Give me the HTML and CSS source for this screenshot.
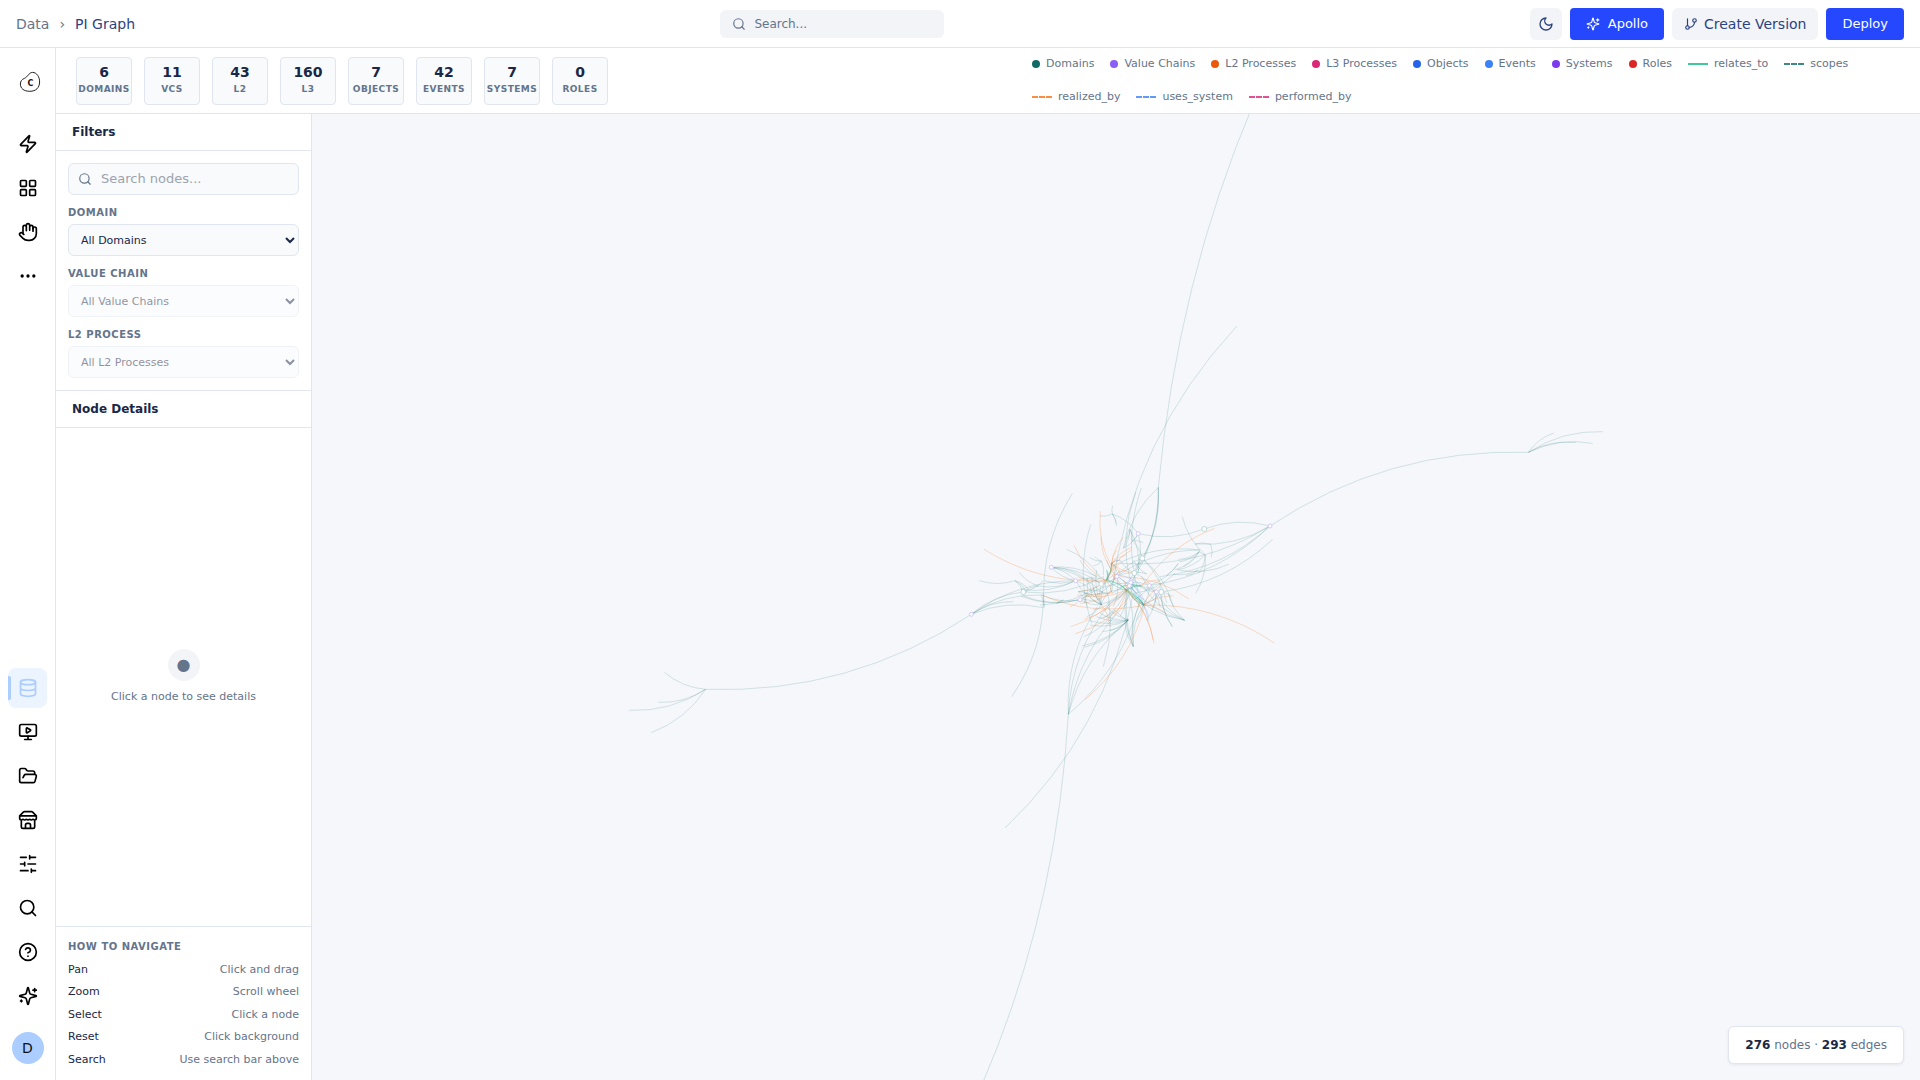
FILE: index.html
```html
<!DOCTYPE html>
<html lang="en">
<head>
<meta charset="utf-8">
<meta name="viewport" content="width=device-width, initial-scale=1">
<title>PI Graph</title>
<link rel="stylesheet" href="styles.css">
</head>
<body>
<div class="app">
  <header class="topbar">
    <nav class="crumbs" aria-label="Breadcrumb">
      <a href="#" class="crumb">Data</a><span class="crumb-sep">›</span><a href="#" class="crumb crumb-current">PI Graph</a>
    </nav>
    <button class="global-search" type="button">
      <svg class="icon icon-sm" viewBox="0 0 24 24"><circle cx="11" cy="11" r="8"/><path d="m21 21-4.3-4.3"/></svg>
      <span>Search...</span>
    </button>
    <div class="actions">
      <button class="btn btn-icon" type="button" aria-label="Toggle theme"><svg class="icon icon-md" viewBox="0 0 24 24"><path d="M12 3a6 6 0 0 0 9 9 9 9 0 1 1-9-9Z"/></svg></button>
      <button class="btn btn-primary" type="button"><svg class="icon icon-sm" viewBox="0 0 24 24"><path d="M9.937 15.5A2 2 0 0 0 8.5 14.063l-6.135-1.582a.5.5 0 0 1 0-.962L8.5 9.936A2 2 0 0 0 9.937 8.5l1.582-6.135a.5.5 0 0 1 .963 0L14.063 8.5A2 2 0 0 0 15.5 9.937l6.135 1.581a.5.5 0 0 1 0 .964L15.5 14.063a2 2 0 0 0-1.437 1.437l-1.582 6.135a.5.5 0 0 1-.963 0zM20 3v4M22 5h-4M4 17v2M5 18H3"/></svg>Apollo</button>
      <button class="btn btn-soft" type="button"><svg class="icon icon-sm" viewBox="0 0 24 24"><path d="M6 3v12"/><circle cx="18" cy="6" r="3"/><circle cx="6" cy="18" r="3"/><path d="M18 9a9 9 0 0 1-9 9"/></svg>Create Version</button>
      <button class="btn btn-primary" type="button">Deploy</button>
    </div>
  </header>

  <div class="shell">
    <nav class="rail" aria-label="Main">
      <a class="logo" href="#" aria-label="Home">
        <svg viewBox="0 0 24 24" width="24" height="24"><path d="M14.5 2.4c4.300 0 7.200 4.600 7.100 9.600-.1 5.700-3.600 9.300-9.800 9.300-6 0-9.400-2.800-9.400-7.300 0-2.900 1.400-4.500 3.900-5.600 3.800-1.500 4.400-6 8.200-6z" fill="none" stroke="#222" stroke-width="1"/><text x="12.500" y="16" text-anchor="middle" class="logo-letter">C</text></svg>
      </a>
      <div class="rail-group">
        <a class="rail-item" href="#" aria-label="Actions"><svg class="icon icon-lg" viewBox="0 0 24 24"><path d="M4 14a1 1 0 0 1-.78-1.630l9.900-10.200a.5.5 0 0 1 .86.46l-1.920 6.020A1 1 0 0 0 13 10h7a1 1 0 0 1 .78 1.630l-9.900 10.200a.5.5 0 0 1-.86-.46l1.920-6.020A1 1 0 0 0 11 14z"/></svg></a>
        <a class="rail-item" href="#" aria-label="Apps"><svg class="icon icon-lg" viewBox="0 0 24 24"><rect x="3" y="3" width="7" height="7" rx="1"/><rect x="14" y="3" width="7" height="7" rx="1"/><rect x="14" y="14" width="7" height="7" rx="1"/><rect x="3" y="14" width="7" height="7" rx="1"/></svg></a>
        <a class="rail-item" href="#" aria-label="Pan"><svg class="icon icon-lg" viewBox="0 0 24 24"><path d="M18 11V6a2 2 0 0 0-2-2a2 2 0 0 0-2 2M14 10V4a2 2 0 0 0-2-2a2 2 0 0 0-2 2v2M10 10.500V6a2 2 0 0 0-2-2a2 2 0 0 0-2 2v8"/><path d="M18 8a2 2 0 1 1 4 0v6a8 8 0 0 1-8 8h-2c-2.800 0-4.500-.86-5.990-2.340l-3.600-3.600a2 2 0 0 1 2.830-2.820L7 15"/></svg></a>
        <a class="rail-item" href="#" aria-label="More"><svg class="icon icon-lg" viewBox="0 0 24 24"><circle cx="12" cy="12" r="1"/><circle cx="19" cy="12" r="1"/><circle cx="5" cy="12" r="1"/></svg></a>
      </div>
      <div class="rail-group rail-bottom">
        <a class="rail-item rail-active" href="#" aria-label="Data" aria-current="page"><svg class="icon icon-lg" viewBox="0 0 24 24"><ellipse cx="12" cy="5" rx="9" ry="3"/><path d="M3 5v14a9 3 0 0 0 18 0V5M3 12a9 3 0 0 0 18 0"/></svg></a>
        <a class="rail-item" href="#" aria-label="Simulate"><svg class="icon icon-lg" viewBox="0 0 24 24"><path d="M10 7.750a.75.75 0 0 1 1.142-.638l3.664 2.249a.75.75 0 0 1 0 1.278l-3.664 2.250a.75.75 0 0 1-1.142-.64zM12 17v4M8 21h8"/><rect x="2" y="3" width="20" height="14" rx="2"/></svg></a>
        <a class="rail-item" href="#" aria-label="Files"><svg class="icon icon-lg" viewBox="0 0 24 24"><path d="m6 14 1.500-2.900A2 2 0 0 1 9.240 10H20a2 2 0 0 1 1.940 2.500l-1.540 6a2 2 0 0 1-1.950 1.500H4a2 2 0 0 1-2-2V5a2 2 0 0 1 2-2h3.900a2 2 0 0 1 1.690.9l.81 1.200a2 2 0 0 0 1.670.9H18a2 2 0 0 1 2 2v2"/></svg></a>
        <a class="rail-item" href="#" aria-label="Marketplace"><svg class="icon icon-lg" viewBox="0 0 24 24"><path d="m2 7 4.410-4.410A2 2 0 0 1 7.830 2h8.340a2 2 0 0 1 1.420.59L22 7M4 12v8a2 2 0 0 0 2 2h12a2 2 0 0 0 2-2v-8M15 22v-4a2 2 0 0 0-2-2h-2a2 2 0 0 0-2 2v4M2 7h20M22 7v3a2 2 0 0 1-2 2a2.700 2.700 0 0 1-1.590-.63.7.7 0 0 0-.82 0A2.700 2.700 0 0 1 16 12a2.700 2.700 0 0 1-1.590-.63.7.7 0 0 0-.82 0A2.700 2.700 0 0 1 12 12a2.700 2.700 0 0 1-1.590-.63.7.7 0 0 0-.82 0A2.700 2.700 0 0 1 8 12a2.700 2.700 0 0 1-1.590-.63.7.7 0 0 0-.82 0A2.700 2.700 0 0 1 4 12a2 2 0 0 1-2-2V7"/></svg></a>
        <a class="rail-item" href="#" aria-label="Settings"><svg class="icon icon-lg" viewBox="0 0 24 24"><path d="M21 4h-7M10 4H3M21 12h-9M8 12H3M21 20h-5M12 20H3M14 2v4M8 10v4M16 18v4"/></svg></a>
        <a class="rail-item" href="#" aria-label="Search"><svg class="icon icon-lg" viewBox="0 0 24 24"><circle cx="11" cy="11" r="8"/><path d="m21 21-4.300-4.300"/></svg></a>
        <a class="rail-item" href="#" aria-label="Help"><svg class="icon icon-lg" viewBox="0 0 24 24"><circle cx="12" cy="12" r="10"/><path d="M9.090 9a3 3 0 0 1 5.830 1c0 2-3 3-3 3M12 17h.01"/></svg></a>
        <a class="rail-item" href="#" aria-label="Assistant"><svg class="icon icon-lg" viewBox="0 0 24 24"><path d="M9.937 15.5A2 2 0 0 0 8.5 14.063l-6.135-1.582a.5.5 0 0 1 0-.962L8.5 9.936A2 2 0 0 0 9.937 8.5l1.582-6.135a.5.5 0 0 1 .963 0L14.063 8.5A2 2 0 0 0 15.5 9.937l6.135 1.581a.5.5 0 0 1 0 .964L15.5 14.063a2 2 0 0 0-1.437 1.437l-1.582 6.135a.5.5 0 0 1-.963 0zM20 3v4M22 5h-4M4 17v2M5 18H3"/></svg></a>
      </div>
      <button class="avatar" type="button">D</button>
    </nav>

    <main class="main">
      <section class="summary">
        <div class="stats">
          <div class="stat"><strong>6</strong><span>DOMAINS</span></div>
          <div class="stat"><strong>11</strong><span>VCS</span></div>
          <div class="stat"><strong>43</strong><span>L2</span></div>
          <div class="stat"><strong>160</strong><span>L3</span></div>
          <div class="stat"><strong>7</strong><span>OBJECTS</span></div>
          <div class="stat"><strong>42</strong><span>EVENTS</span></div>
          <div class="stat"><strong>7</strong><span>SYSTEMS</span></div>
          <div class="stat"><strong>0</strong><span>ROLES</span></div>
        </div>
        <ul class="legend">
          <li><i class="dot c-domain"></i>Domains</li>
          <li><i class="dot c-chain"></i>Value Chains</li>
          <li><i class="dot c-l2"></i>L2 Processes</li>
          <li><i class="dot c-l3"></i>L3 Processes</li>
          <li><i class="dot c-object"></i>Objects</li>
          <li><i class="dot c-event"></i>Events</li>
          <li><i class="dot c-system"></i>Systems</li>
          <li><i class="dot c-role"></i>Roles</li>
          <li><i class="line solid l-relates"></i>relates_to</li>
          <li><i class="line l-scopes"></i>scopes</li>
          <li><i class="line l-realized"></i>realized_by</li>
          <li><i class="line l-uses"></i>uses_system</li>
          <li><i class="line l-performed"></i>performed_by</li>
        </ul>
      </section>

      <div class="workspace">
        <aside class="panel">
          <h2 class="panel-title">Filters</h2>
          <form class="filters">
            <div class="search-field">
              <svg class="icon icon-sm" viewBox="0 0 24 24"><circle cx="11" cy="11" r="8"/><path d="m21 21-4.300-4.300"/></svg>
              <input type="text" placeholder="Search nodes..." aria-label="Search nodes">
            </div>
            <div class="field"><label for="domain">DOMAIN</label><select id="domain"><option>All Domains</option></select></div>
            <div class="field"><label for="chain">VALUE CHAIN</label><select id="chain" disabled><option>All Value Chains</option></select></div>
            <div class="field"><label for="process">L2 PROCESS</label><select id="process" disabled><option>All L2 Processes</option></select></div>
          </form>
          <h2 class="panel-title panel-title-next">Node Details</h2>
          <div class="empty"><span class="empty-icon">●</span><p>Click a node to see details</p></div>
          <section class="help">
            <h3>HOW TO NAVIGATE</h3>
            <dl>
              <div><dt>Pan</dt><dd>Click and drag</dd></div>
              <div><dt>Zoom</dt><dd>Scroll wheel</dd></div>
              <div><dt>Select</dt><dd>Click a node</dd></div>
              <div><dt>Reset</dt><dd>Click background</dd></div>
              <div><dt>Search</dt><dd>Use search bar above</dd></div>
            </dl>
          </section>
        </aside>
        <section class="stage" aria-label="Graph">
          <svg id="graph" viewBox="0 0 1608 966" preserveAspectRatio="xMidYMid slice"></svg>
          <p class="counter"><strong>276</strong> nodes · <strong>293</strong> edges</p>
        </section>
      </div>
    </main>
  </div>
</div>
<script src="graph.js"></script>
</body>
</html>
```
FILE: graph.js
```js
// Each edge: x1, y1, x2, y2 in layout units (three per pixel). Edges bow to the left of their direction.
const SCALE = 1 / 3;
const ORIGIN = [648, 346];
const BOW = 0.16;

const edges = {
  scopes: [
    // long branches
    [930,198,1705,-23],[1705,-23,1928,-85],[1705,-23,1898,-50],[1705,-23,1781,-81],[1705,-23,1848,-53],
    [34,463,-763,688],[-763,688,-887,637],[-763,688,-905,727],[-763,688,-992,751],[-763,688,-926,818],
    [595,82,1515,-2080],[325,763,-400,2640],[455,395,830,-401],[520,400,135,1104],
    [250,400,155,710],[252,440,337,100],[395,490,392,193],
    // upper cluster
    [595,82,508,375],[595,82,520,345],[595,82,545,300],[490,265,595,82],[535,395,544,84],[512,370,527,98],
    [457,162,458,137],[457,162,420,168],[457,162,470,198],[457,162,535,221],[457,162,468,190],
    [732,207,535,221],[732,207,930,198],[510,208,490,265],[510,208,516,240],[510,208,500,238],[535,221,516,242],
    [516,242,550,248],[535,221,490,265],[535,221,530,330],[510,208,535,340],[516,242,547,295],
    // right cluster
    [930,198,705,252],[930,198,600,350],[930,198,568,377],[938,238,604,396],[455,320,720,270],[930,198,480,310],[471,349,720,270],
    [736,285,707,400],[736,285,667,170],[736,285,718,275],[705,252,752,253],[752,253,754,292],[806,313,655,330],
    [718,275,645,330],[718,275,655,298],[718,275,658,306],[718,275,670,320],[736,285,650,330],[715,330,678,347],
    [736,285,715,340],[655,310,620,345],[715,330,640,343],[655,310,568,377],[645,340,523,400],
    [674,481,550,380],[674,481,508,377],[674,481,500,390],[674,481,589,396],[674,481,625,400],[637,500,604,396],
    [637,500,600,370],[604,396,632,408],[589,396,575,450],[547,295,640,440],[547,295,620,430],
    // left cluster
    [34,463,190,396],[34,463,250,443],[34,463,245,405],[34,463,347,362],[34,463,160,425],
    [165,362,58,362],[165,362,190,396],[165,362,205,388],[165,362,200,395],[190,396,235,378],[235,378,178,337],
    [250,362,190,396],[347,362,235,378],[347,362,183,388],[347,362,254,362],[430,350,190,396],
    [360,419,245,405],[360,419,190,408],[360,419,183,409],[243,405,253,443],[310,420,290,430],[424,372,240,435],
    [274,322,347,362],[274,322,424,372],[274,322,410,350],[274,322,375,355],[347,362,274,322],[274,322,430,400],
    [320,268,420,350],[424,434,347,362],[424,434,360,419],[290,430,310,420],
    // lower cluster
    [325,763,505,480],[325,763,450,430],[325,763,412,440],[540,420,325,763],[325,763,500,430],[430,350,430,620],
    [520,560,500,390],[520,560,508,377],[520,560,540,430],[520,560,550,435],[520,560,495,480],
    [505,480,420,460],[505,480,388,482],[505,480,390,495],[505,480,428,515],[505,480,374,562],[505,480,466,450],
    [505,480,450,512],[505,480,366,558],[505,480,440,440],[505,480,410,470],[466,450,420,475],[466,450,372,530],
    // core
    [424,434,424,372],[424,434,400,380],[424,434,395,350],[424,434,440,360],[424,434,450,395],[424,434,382,400],
    [424,434,410,330],[424,434,380,470],[425,304,388,292],[425,304,400,318],[425,304,404,290],[425,304,430,345],
    [380,355,372,430],[380,355,395,410],[380,355,424,372],[355,395,420,420],[355,395,382,440],[355,395,440,400],
    [471,349,424,372],[471,349,400,410],[471,349,523,339],[471,349,460,440],[471,349,440,300],[471,349,547,295],
    [523,339,560,342],[523,339,480,300],[523,339,589,396],[523,339,547,295],[523,339,500,420],[523,339,455,400],
    [512,368,568,377],[512,368,424,434],[512,368,550,435],[512,368,470,420],[508,377,589,396],[508,377,440,430],
    [568,377,600,440],[568,377,550,435],[568,377,520,420],[568,377,545,350],[589,396,550,435],[589,396,560,480],
    [604,396,550,435],[604,396,540,380],[450,395,480,330],[450,395,500,390],[455,310,440,360],[455,310,480,300],
    [500,390,480,470],[500,390,430,475],[500,390,545,375],[500,390,470,350],[500,390,400,450],[500,390,512,540],
    [550,435,500,390],[550,435,530,480],[550,435,508,377],[440,360,500,390],[440,360,455,330],[360,419,424,434],
    [360,419,450,400],[360,419,512,368],[347,362,440,360],[347,362,400,400],[410,350,360,300],[560,342,520,300]
  ],
  realized: [
    [440,362,72,268],[550,435,943,549],[555,435,375,719],[500,390,582,550],[505,395,580,540],[455,320,421,153],
    [455,330,423,230],[480,350,687,417],[545,380,764,205],[440,365,342,256],[480,400,332,500],[500,420,346,521],
    [555,435,245,405],[455,310,515,262],[455,310,490,233],[455,310,500,285],[455,310,440,362],
    [455,310,470,270],[455,330,515,270],[440,362,480,310],[440,362,500,330],[440,362,355,395],[500,390,352,405],
    [500,390,372,478],[440,362,352,350],[455,395,360,430],[550,435,615,458],[550,435,600,380],[500,390,440,490],
    [455,310,462,360],[455,310,447,345],[455,310,480,340],[550,435,490,360],[500,390,455,340],[424,434,450,500],
    [455,395,370,400],[540,378,600,360],[360,419,330,440],[440,362,456,400],[550,435,640,408],[523,339,455,310]
  ],
  uses: [[471,349,530,410],[471,349,550,435],[508,377,566,484],[475,345,545,378],[455,310,480,300],[512,368,555,430],[530,410,566,470],[440,330,445,360]],
  relates: [
    [440,330,440,362],[444,335,438,360],[440,362,500,390],[500,390,442,360],[500,390,550,435],[552,436,505,395],
    [512,400,550,432],[500,390,545,378],[480,382,540,378],[490,378,542,377],[520,408,553,436],[455,310,440,360],[455,308,470,335]
  ]
};

const nodes = {
  chain: [[34,463],[274,322],[347,362],[360,419],[535,221],[930,198],[471,349],[512,368],[508,377],[568,377],[589,396]],
  domain: [[190,396],[424,372],[547,295],[523,339],[604,396],[733,207]]
};

const svg = document.getElementById("graph");
const NS = "http://www.w3.org/2000/svg";
const px = (x, i) => ORIGIN[i] + x * SCALE;

function add(name, attrs) {
  const el = document.createElementNS(NS, name);
  for (const key in attrs) el.setAttribute(key, attrs[key]);
  svg.appendChild(el);
}

for (const kind in edges) {
  for (const [a, b, c, d] of edges[kind]) {
    const x1 = px(a, 0), y1 = px(b, 1), x2 = px(c, 0), y2 = px(d, 1);
    const cx = (x1 + x2) / 2 + (y2 - y1) * BOW;
    const cy = (y1 + y2) / 2 - (x2 - x1) * BOW;
    add("path", { class: "edge edge-" + kind, d: `M${x1} ${y1}Q${cx} ${cy} ${x2} ${y2}` });
  }
}
for (const kind in nodes) {
  for (const [x, y] of nodes[kind]) {
    add("circle", { class: "node node-" + kind, cx: px(x, 0), cy: px(y, 1), r: kind === "domain" ? 2.5 : 2 });
  }
}
```
FILE: styles.css
```css
:root {
  --ink: #1a2747;
  --muted: #64748b;
  --navy: #2b4282;
  --line: #e0e6ef;
  --soft: #f2f4f8;
  --field: #f8fafc;
  --blue: #2548ff;
  --sky: #abcdff;
}

* { box-sizing: border-box; }

body {
  margin: 0;
  font-family: "DejaVu Sans", sans-serif;
  font-size: 11px;
  line-height: 1.5;
  color: var(--ink);
  background: #fff;
}

button, input, select { font: inherit; color: inherit; }
button { border: 0; cursor: pointer; }
a { color: inherit; text-decoration: none; }
h2, h3, p, ul, dl, dd { margin: 0; padding: 0; }

.app { display: flex; flex-direction: column; height: 100vh; }

.icon {
  flex: none;
  fill: none;
  stroke: currentColor;
  stroke-width: 2;
  stroke-linecap: round;
  stroke-linejoin: round;
}
.icon-sm { width: 14px; height: 14px; }
.icon-md { width: 16px; height: 16px; }
.icon-lg { width: 20px; height: 20px; }

/* Top bar */
.topbar {
  display: flex;
  flex: none;
  align-items: center;
  justify-content: space-between;
  height: 48px;
  padding: 1px 16px 0;
  border-bottom: 1px solid var(--line);
}
.crumbs { display: flex; gap: 10px; font-size: 14px; color: var(--muted); }
.crumb-current { color: var(--navy); }
.global-search {
  display: flex;
  align-items: center;
  gap: 8px;
  width: 224px;
  height: 28px;
  padding: 0 12px;
  border-radius: 6px;
  background: var(--soft);
  color: var(--muted);
  font-size: 12px;
}
.actions { display: flex; gap: 8px; }
.btn {
  display: flex;
  align-items: center;
  justify-content: center;
  height: 32px;
  border-radius: 6px;
}
.btn-icon { width: 32px; padding: 0; background: var(--soft); color: var(--navy); }
.btn-primary { gap: 8px; padding: 0 16px; border-radius: 4px; background: var(--blue); color: #fff; font-size: 13px; }
.btn-soft { gap: 6px; padding: 0 12px; background: var(--soft); color: var(--navy); font-size: 14px; }

.shell { display: flex; flex: 1; min-height: 0; }

/* Icon rail */
.rail {
  display: flex;
  flex: none;
  flex-direction: column;
  width: 56px;
  padding: 0 8px 16px;
  border-right: 1px solid var(--line);
  color: #000;
}
.logo { display: flex; align-items: center; justify-content: center; height: 68px; padding-left: 4px; }
.logo-letter { font-size: 8px; font-weight: 700; fill: #111; }
.rail-group { display: flex; flex-direction: column; gap: 4px; padding-top: 8px; }
.rail-bottom { margin-top: auto; }
.rail-item {
  display: flex;
  position: relative;
  align-items: center;
  justify-content: center;
  height: 40px;
  border-radius: 8px;
}
.rail-active { background: #ecf4ff; color: var(--sky); }
.rail-active::before {
  content: "";
  position: absolute;
  left: 0;
  top: 8px;
  width: 3px;
  height: 24px;
  border-radius: 0 2px 2px 0;
  background: var(--sky);
}
.avatar {
  align-self: center;
  width: 32px;
  height: 32px;
  margin-top: 16px;
  padding: 0;
  border-radius: 50%;
  background: var(--sky);
  color: #111;
  font-size: 14px;
}

/* Summary strip */
.main { display: flex; flex: 1; flex-direction: column; min-width: 0; }
.summary {
  display: flex;
  flex: none;
  align-items: center;
  justify-content: space-between;
  gap: 24px;
  padding: 8px 20px;
  border-bottom: 1px solid var(--line);
}
.stats { display: flex; gap: 12px; }
.stat {
  display: flex;
  flex-direction: column;
  align-items: center;
  justify-content: center;
  width: 56px;
  height: 48px;
  padding-bottom: 2px;
  border: 1px solid var(--line);
  border-radius: 4px;
  background: var(--field);
}
.stat strong { font-size: 14px; line-height: 18px; }
.stat span { color: var(--muted); font-size: 9px; font-weight: 700; line-height: 16px; letter-spacing: .05em; }
.legend {
  display: flex;
  flex-wrap: wrap;
  gap: 16px;
  max-width: 868px;
  color: var(--muted);
  list-style: none;
}
.legend li { display: flex; align-items: center; gap: 6px; }
.dot { width: 8px; height: 8px; border-radius: 50%; }
.line { width: 20px; border-top: 2px dashed; opacity: .8; }
.solid { border-top-style: solid; }
.c-domain { background: #0f6b68; }
.c-chain { background: #8b5cf6; }
.c-l2 { background: #ea580c; }
.c-l3 { background: #db2777; }
.c-object { background: #2563eb; }
.c-event { background: #3b82f6; }
.c-system { background: #7c3aed; }
.c-role { background: #dc2626; }
.l-relates { border-color: #10b981; }
.l-scopes { border-color: #0f6b68; }
.l-realized { border-color: #f97316; }
.l-uses { border-color: #3b82f6; }
.l-performed { border-color: #db2777; }

/* Left panel */
.workspace { display: flex; flex: 1; min-height: 0; }
.panel {
  display: flex;
  flex: none;
  flex-direction: column;
  width: 256px;
  border-right: 1px solid var(--line);
}
.panel-title {
  padding: 9px 16px;
  border-bottom: 1px solid var(--line);
  font-size: 12px;
  line-height: 18px;
}
.panel-title-next { border-top: 1px solid var(--line); }
.filters { display: flex; flex-direction: column; gap: 10px; padding: 12px; }
.search-field {
  display: flex;
  align-items: center;
  gap: 9px;
  height: 32px;
  padding: 0 9px;
  border: 1px solid var(--line);
  border-radius: 6px;
  background: var(--field);
  color: var(--muted);
}
.search-field input {
  flex: 1;
  min-width: 0;
  padding: 0;
  border: 0;
  outline: 0;
  background: none;
  font-size: 13px;
}
.search-field input::placeholder { color: #9ca3af; }
.field { display: flex; flex-direction: column; gap: 4px; }
.field label, .help h3 {
  color: var(--muted);
  font-size: 10px;
  font-weight: 700;
  line-height: 15px;
  letter-spacing: .05em;
}
.field select {
  height: 32px;
  padding: 0 8px;
  border: 1px solid var(--line);
  border-radius: 6px;
  background: var(--field);
}
.field select:disabled { opacity: .5; }
.empty {
  display: flex;
  flex: 1;
  flex-direction: column;
  align-items: center;
  justify-content: center;
  gap: 8px;
  color: var(--muted);
}
.empty-icon {
  display: flex;
  align-items: center;
  justify-content: center;
  width: 32px;
  height: 32px;
  border-radius: 50%;
  background: var(--soft);
  font-size: 16px;
}
.help { padding: 12px; border-top: 1px solid var(--line); }
.help dl { display: flex; flex-direction: column; gap: 6px; margin-top: 8px; }
.help dl div { display: flex; justify-content: space-between; }
.help dd { color: var(--muted); }

/* Graph */
.stage { position: relative; flex: 1; min-width: 0; background: #f5f7fb; }
.stage svg { display: block; width: 100%; height: 100%; }
.edge { fill: none; stroke-width: 1; }
.edge-scopes { stroke: #0f6b68; opacity: .16; }
.edge-realized { stroke: #f97316; opacity: .24; }
.edge-uses { stroke: #3b82f6; opacity: .2; }
.edge-relates { stroke: #10b981; opacity: .3; }
.node { fill: #fff; stroke-width: 1; }
.node-chain { stroke: #d5c8fb; }
.node-domain { stroke: #bcd8d8; }
.counter {
  position: absolute;
  right: 16px;
  bottom: 16px;
  padding: 9px 16px;
  border: 1px solid var(--line);
  border-radius: 6px;
  background: #fff;
  box-shadow: 0 1px 3px rgba(20, 40, 80, .08);
  color: var(--muted);
  font-size: 12px;
}
.counter strong { color: var(--ink); }
```
